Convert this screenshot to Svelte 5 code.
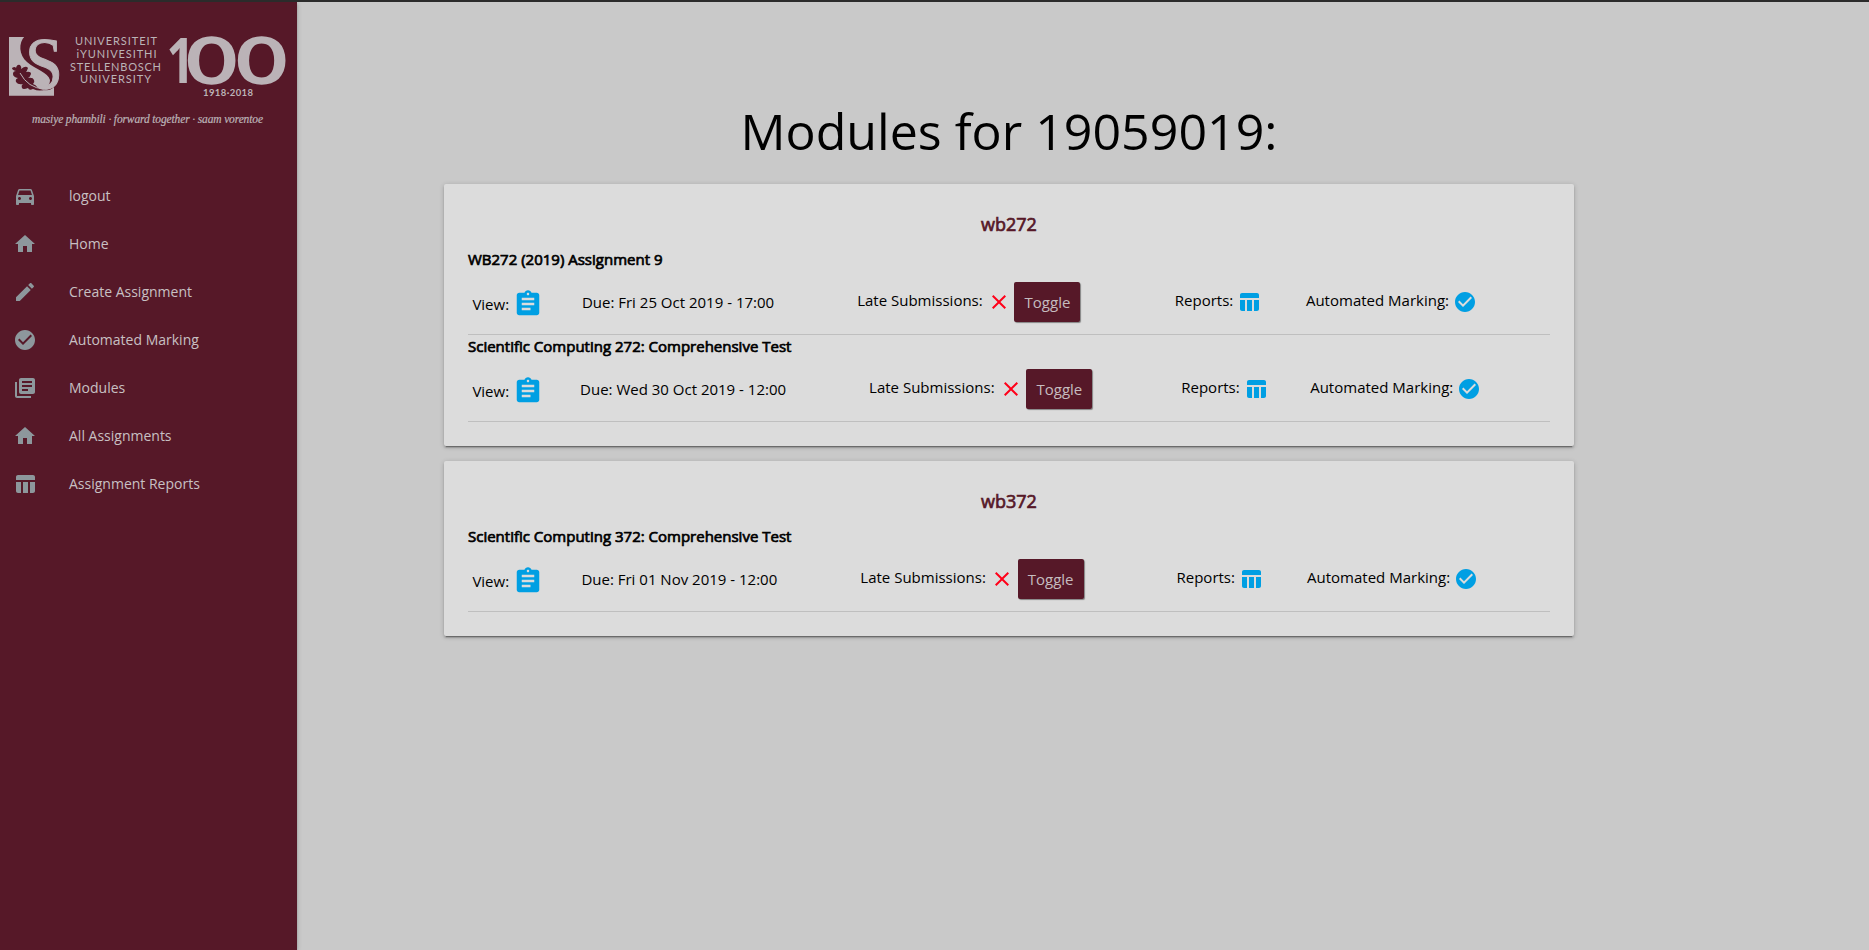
<script>
  const icons = {
    car: 'M18.92 6.01C18.72 5.42 18.16 5 17.5 5h-11c-.66 0-1.21.42-1.42 1.01L3 12v8c0 .55.45 1 1 1h1c.55 0 1-.45 1-1v-1h12v1c0 .55.45 1 1 1h1c.55 0 1-.45 1-1v-8l-2.08-5.99zM6.5 16c-.83 0-1.5-.67-1.5-1.5S5.67 13 6.5 13s1.5.67 1.5 1.5S7.33 16 6.5 16zm11 0c-.83 0-1.5-.67-1.5-1.5s.67-1.5 1.5-1.5 1.5.67 1.5 1.5-.67 1.5-1.5 1.5zM5 11l1.5-4.5h11L19 11H5z',
    home: 'M10 20v-6h4v6h5v-8h3L12 3 2 12h3v8z',
    edit: 'M3 17.25V21h3.75L17.81 9.94l-3.75-3.75L3 17.25zM20.71 7.04c.39-.39.39-1.02 0-1.41l-2.34-2.34c-.39-.39-1.02-.39-1.41 0l-1.83 1.83 3.75 3.75 1.83-1.83z',
    check: 'M12 2C6.48 2 2 6.48 2 12s4.48 10 10 10 10-4.48 10-10S17.52 2 12 2zm-2 15l-5-5 1.41-1.41L10 14.17l7.59-7.59L19 8l-9 9z',
    books: 'M4 6H2v14c0 1.1.9 2 2 2h14v-2H4V6zm16-4H8c-1.1 0-2 .9-2 2v12c0 1.1.9 2 2 2h12c1.1 0 2-.9 2-2V4c0-1.1-.9-2-2-2zm-1 9H9V9h10v2zm-4 4H9v-2h6v2zm4-8H9V5h10v2z',
    table: 'M10 10.02h5V21h-5V10.02zM17 21h3c1.1 0 2-.9 2-2v-9h-5v11zm3-18H5c-1.1 0-2 .9-2 2v3h19V5c0-1.1-.9-2-2-2zM3 19c0 1.1.9 2 2 2h3V10H3v9z',
    clipboard: 'M19 3h-4.18C14.4 1.84 13.3 1 12 1c-1.3 0-2.4.84-2.82 2H5c-1.1 0-2 .9-2 2v14c0 1.1.9 2 2 2h14c1.1 0 2-.9 2-2V5c0-1.1-.9-2-2-2zm-7 0c.55 0 1 .45 1 1s-.45 1-1 1-1-.45-1-1 .45-1 1-1zm2 14H7v-2h7v2zm3-4H7v-2h10v2zm0-4H7V7h10v2z',
    close: 'M19 6.41L17.59 5 12 10.59 6.41 5 5 6.41 10.59 12 5 17.59 6.41 19 12 13.41 17.59 19 19 17.59 13.41 12z'
  };

  const links = [
    ['car', 'logout'],
    ['home', 'Home'],
    ['edit', 'Create Assignment'],
    ['check', 'Automated Marking'],
    ['books', 'Modules'],
    ['home', 'All Assignments'],
    ['table', 'Assignment Reports']
  ];

  const modules = [
    {
      code: 'wb272',
      assignments: [
        { name: 'WB272 (2019) Assignment 9', due: 'Fri 25 Oct 2019 - 17:00' },
        { name: 'Scientific Computing 272: Comprehensive Test', due: 'Wed 30 Oct 2019 - 12:00' }
      ]
    },
    {
      code: 'wb372',
      assignments: [
        { name: 'Scientific Computing 372: Comprehensive Test', due: 'Fri 01 Nov 2019 - 12:00' }
      ]
    }
  ];
</script>

{#snippet icon(name, size)}
  <svg class="icon" width={size} height={size} viewBox="0 0 24 24"><path d={icons[name]} /></svg>
{/snippet}

<div class="page">
  <aside class="sidebar">
    <svg class="logo" width="297" height="140" viewBox="0 0 297 140">
      <rect class="light" x="9" y="37" width="45" height="58.5" />
      <path class="dark" d="M25 36C18 43 19 55 27 62C36 70 48 72 50 80C50 86 46 88 40 90L53 91L55 97L62 97L62 36Z" />
      <path class="light" d="M40 90Q49 92 54 87V95.500H9V90Z" />
      <text class="light initial" x="25" y="89" textLength="38" lengthAdjust="spacingAndGlyphs">S</text>
      <path class="dark" d="M12 68q3-2 4 0q1-4 4-3q2 2 1 4q5-4 7-1q-1 3-2 4q5-1 5 2q-1 3-3 4q5-1 6 2q1 2-1 4q3 1 4 3q4 4 9 2q-6 3-13 0q-4 2-5-1q-5 2-6 0q-1-3 1-4q-5 1-7-2q-1-3 2-4q-5-1-5-4q0-3 3-3q-4-1-4-3z" />
      <path class="vein" d="M20 73Q28 88 44 89" />
      <g class="light names">
        <text x="75" y="45" textLength="82">UNIVERSITEIT</text>
        <text x="76.500" y="58" textLength="80">iYUNIVESITHI</text>
        <text x="70" y="70.500" textLength="91">STELLENBOSCH</text>
        <text x="80" y="83" textLength="71">UNIVERSITY</text>
      </g>
      <g class="light">
        <text class="one" transform="translate(166.500 83) scale(.78 1)">1</text>
        <text class="zero" transform="translate(187 83.200) scale(1.36 1)">0</text>
        <text class="zero" transform="translate(237 83.200) scale(1.36 1)">0</text>
      </g>
      <text class="light years" x="203" y="95.500" textLength="50">1918·2018</text>
      <text class="light motto" x="32" y="122.500" textLength="231">masiye phambili · forward together · saam vorentoe</text>
    </svg>
    <nav>
      {#each links as [name, label]}
        <a class="link" href="#top">{@render icon(name, 24)}<span>{label}</span></a>
      {/each}
    </nav>
  </aside>

  <main>
    <h1>Modules for 19059019:</h1>
    {#each modules as module}
      <section class="card">
        <h2>{module.code}</h2>
        {#each module.assignments as item}
          <article>
            <h3>{item.name}</h3>
            <table>
              <tbody>
                <tr>
                  <td><div class="cell view"><span>View:</span>{@render icon('clipboard', 30)}</div></td>
                  <td><div class="cell due"><span>Due: {item.due}</span></div></td>
                  <td>
                    <div class="cell">
                      <span>Late Submissions:</span>
                      <i class="no">{@render icon('close', 24)}</i>
                      <button>Toggle</button>
                    </div>
                  </td>
                  <td><div class="cell"><span>Reports:</span>{@render icon('table', 24)}</div></td>
                  <td><div class="cell marking"><span>Automated Marking:</span>{@render icon('check', 24)}</div></td>
                </tr>
              </tbody>
            </table>
          </article>
        {/each}
      </section>
    {/each}
  </main>
</div>

<style>
  :global(body) {
    margin: 0;
    background: #c9c9c9;
  }
  .page {
    box-sizing: border-box;
    display: flex;
    height: 950px;
    border-top: 2px solid #2b2b2b;
    background: #c9c9c9;
    color: #000;
    font: 15px/22px "Open Sans", sans-serif;
    overflow: hidden;
  }
  .sidebar {
    flex: none;
    width: 297px;
    background: #561828;
    box-shadow: 0 2px 2px rgba(0, 0, 0, .14), 0 3px 1px -2px rgba(0, 0, 0, .12), 0 1px 5px rgba(0, 0, 0, .2);
  }
  .logo {
    display: block;
    margin-top: -2px;
  }
  .light { fill: #bbb3b7; }
  .dark { fill: #561828; }
  .vein {
    fill: none;
    stroke: #bbb3b7;
    stroke-width: 1;
  }
  .initial {
    font: 75px "Liberation Serif", serif;
    stroke: #bbb3b7;
    stroke-width: 1;
  }
  .names { font: 11px Lato, sans-serif; }
  .one { font: 700 63px "Open Sans", sans-serif; }
  .zero {
    font: 400 62.5px Lato, sans-serif;
    stroke: #bbb3b7;
    stroke-width: 3;
    vector-effect: non-scaling-stroke;
  }
  .years { font: 700 9.5px Lato, sans-serif; }
  .motto {
    font: italic 11.5px "Liberation Serif", serif;
    stroke: #bbb3b7;
    stroke-width: .2;
  }
  nav {
    padding-top: 32px;
  }
  .link {
    display: flex;
    align-items: center;
    gap: 32px;
    height: 48px;
    padding-left: 13px;
    color: #c8c0c3;
    font-size: 14px;
    text-decoration: none;
  }
  .icon {
    flex: none;
    display: block;
    fill: #009fe3;
  }
  .link .icon { fill: #8d979c; }
  main {
    width: 1130px;
    margin-left: 147px;
  }
  h1 {
    margin: 94px 0 19px;
    font-size: 50.1px;
    font-weight: 400;
    line-height: 69px;
    text-align: center;
  }
  .card {
    box-sizing: border-box;
    margin-bottom: 15px;
    padding: 24px;
    border-radius: 2px;
    background: #dcdcdc;
    box-shadow: 0 2px 2px rgba(0, 0, 0, .14), 0 3px 1px -2px rgba(0, 0, 0, .3), 0 1px 5px rgba(0, 0, 0, .2);
  }
  h2 {
    margin: 0 0 8px;
    color: #561828;
    font-size: 18px;
    font-weight: 400;
    line-height: 32px;
    text-align: center;
    -webkit-text-stroke: .7px currentColor;
  }
  h3 {
    margin: 0;
    font-size: 15px;
    font-weight: 400;
    line-height: 22px;
    -webkit-text-stroke: .7px currentColor;
  }
  article {
    height: 86px;
    border-bottom: 1px solid #bfbfbf;
  }
  table {
    width: 100%;
    border-collapse: collapse;
  }
  td {
    height: 64px;
    padding: 0 5px;
  }
  td:first-child { padding-left: 4.4px; }
  .cell {
    display: flex;
    align-items: center;
    gap: 3.9px;
    width: max-content;
    white-space: nowrap;
  }
  .cell span { margin-bottom: 4px; }
  .view { padding-top: 3px; }
  .view span, .due span { margin-bottom: 0; }
  .view span { padding-top: 1px; }
  .marking { padding-right: 2px; }
  .no .icon { fill: #ff0019; }
  button {
    width: 66px;
    height: 40px;
    margin: 0;
    padding: 0;
    border: 0;
    border-radius: 2px;
    background: #561828;
    color: #c5bcbf;
    font: inherit;
    box-shadow: 1px 1px 1px rgba(0, 0, 0, .4);
  }
</style>
